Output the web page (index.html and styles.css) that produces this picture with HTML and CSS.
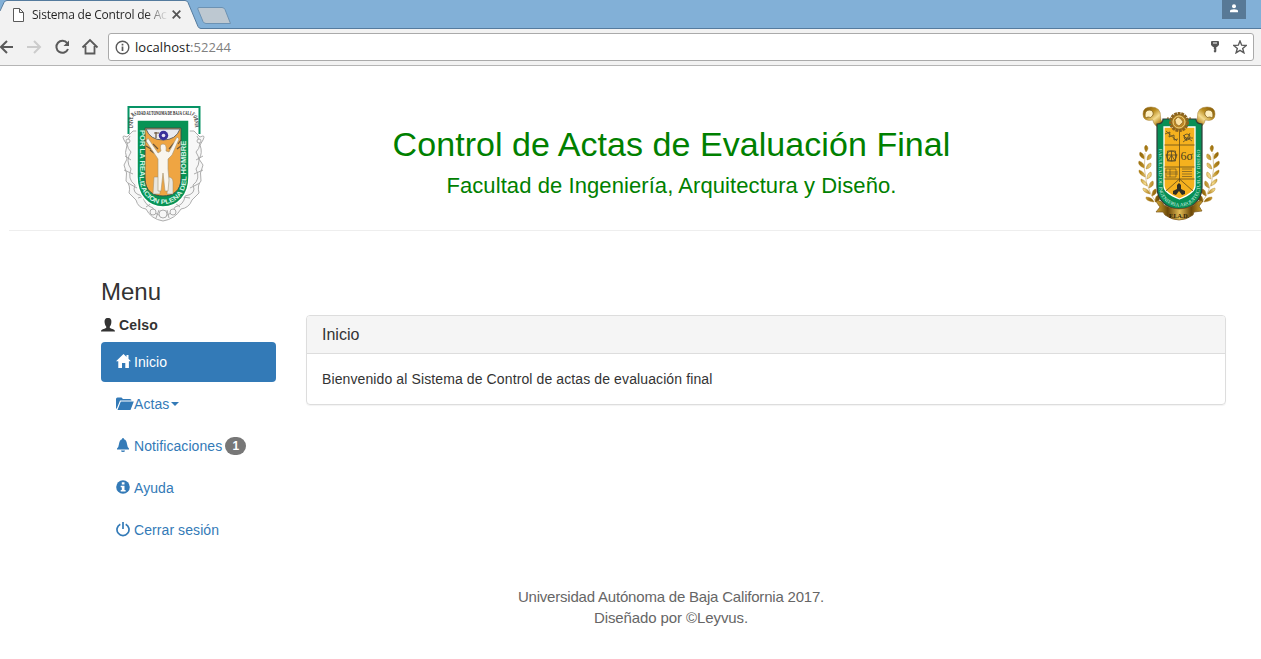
FILE: index.html
```html
<!DOCTYPE html>
<html lang="es">
<head>
<meta charset="utf-8">
<title>Sistema de Control de Actas</title>
<link rel="stylesheet" href="styles.css">
</head>
<body>
<div class="browser">
  <div class="tabstrip">
    <svg class="tab-shapes" width="240" height="29" viewBox="0 0 240 29">
      <path d="M-2 29V14L4 2.500Q5 .5 7 .5H185Q187 .5 188 2.500L198 26.500Q199 28.500 201 28.500V30H-2Z" fill="#f2f2f2"/>
      <path d="M0 11L4 2.500Q5 .5 7 .5H185Q187 .5 188 2.500L198 26.500Q199 28.500 201 28.500H240" fill="none" stroke="#557b9e"/>
      <path d="M199 7.500H222Q224 7.500 225 9.500L230.500 23.500H206Q204 23.500 203 21.500L197.800 9Q197.500 7.500 199 7.500Z" fill="#bdc8d1" stroke="#6c92b3"/>
    </svg>
    <div class="tab-content">
      <svg width="11" height="14" viewBox="0 0 11 14" fill="#fff" stroke="#5a5a5a"><path d="M.5.5H6.500L10.500 4.500V13.500H.5ZM6.500.5V4.500H10.500"/></svg>
      <span class="tab-title">Sistema de Control de Ac</span>
      <svg class="tab-close" width="9" height="9" viewBox="0 0 9 9" fill="none" stroke="#555" stroke-width="1.800"><path d="M.7.7L8.300 8.300M8.300.7L.7 8.300"/></svg>
    </div>
    <div class="profile"><svg width="10" height="9" viewBox="0 0 10 9" fill="#fff"><circle cx="5" cy="2.200" r="2"/><path d="M1 8.300V7Q1 5.300 5 5.300T9 7V8.300Z"/></svg></div>
  </div>
  <div class="toolbar">
    <svg class="nav" width="108" height="37" viewBox="0 0 108 37" fill="none" stroke="#5a5a5a" stroke-width="2">
      <path d="M13 18H1M7 12L1 18L7 24"/>
      <path d="M27 18H39M34 12L40 18L34 24" stroke="#ccc"/>
      <path d="M67.200 14.200A6 6 0 1 0 68 20"/><path d="M69 11.500V17H63.500Z" fill="#5a5a5a" stroke="none"/>
      <path d="M82.500 18.500L90 11L97.500 18.500M85.500 17V24.500H94.500V17" stroke-width="1.800"/>
    </svg>
    <div class="address">
      <svg width="15" height="15" viewBox="0 0 15 15" fill="none" stroke="#5a5a5a" stroke-width="1.400"><circle cx="7.500" cy="7.500" r="6.300"/><path d="M7.500 6.500V11M7.500 3.700V5.400" stroke-width="1.700"/></svg>
      <span class="url">localhost<span class="port">:52244</span></span>
      <svg class="key" width="10" height="14" viewBox="0 0 10 14"><path d="M1 2Q1 1 2 1H8Q9 1 9 2V5L7 7H6.300V11.500L5 12.700L3.800 11.500V10.500L4.700 10L3.800 9V7H3L1 5Z" fill="#555"/><path d="M3 3H7" stroke="#fff"/></svg>
      <svg class="star" width="14" height="14" viewBox="0 0 14 14"><path d="M7 1L8.700 5.200L13.200 5.500L9.700 8.400L10.900 12.800L7 10.400L3.100 12.800L4.300 8.400L.8 5.500L5.300 5.200Z" fill="none" stroke="#5a5a5a" stroke-width="1.400"/></svg>
    </div>
  </div>
</div>

<header class="masthead">
  <div class="masthead-inner">
    <svg class="crest" width="110" height="135" viewBox="0 0 110 135">
      <g fill="#f7f7f7" stroke="#a4a4a4" stroke-width=".9">
        <path d="M17 42Q11 39 14 45L17 50Q14 58 17 64L14 70Q18 78 16 86Q21 90 19 98L26 105Q28 113 36 114Q41 124 53 126Q65 124 71 114Q79 113 82 105L89 98Q87 90 91 86Q89 78 93 70L89 64Q93 58 90 50L93 45Q96 39 90 42L84 36H23Z"/>
        <path d="M20 41Q14 50 21 57Q15 66 21 74Q17 84 25 90Q21 99 33 101Q34 110 43 113Q44 120 53 121Q62 120 65 112Q74 110 75 101Q87 99 83 90Q91 84 86 74Q92 66 86 57Q93 50 87 41" fill="none"/>
        <path d="M15 61L21 65M14 75L23 79M18 88L27 93M28 103L34 101M36 112L42 108M46 123L49 115M59 123L57 115M93 61L86 65M93 75L84 79M90 88L80 93M80 103L73 102M70 112L65 108"/>
        <circle cx="18" cy="46" r="2"/><circle cx="89" cy="46" r="2"/><circle cx="43" cy="117" r="3"/><circle cx="63" cy="117" r="3"/><circle cx="53" cy="119" r="4"/>
      </g>
      <path d="M25 32V20H83V32Z" fill="#fff"/>
      <path d="M18.500 39V12H89.500V39" fill="none" stroke="#079365" stroke-width="2"/>
      <path d="M27 25H79V82C79 100 68 112 53 112S27 100 27 82Z" fill="#079355" stroke="#fff" stroke-width="1.500"/>
      <path d="M35 33H71V83C71 96 63 101 53 101S35 96 35 83Z" fill="#efa542" stroke="#35564b" stroke-width="1"/>
      <path d="M36 34H70Q66 45 53 45T36 34Z" fill="#e9eaf0" stroke="#666"/>
      <circle cx="53.500" cy="40.500" r="4.700" fill="#39309a"/><circle cx="53.500" cy="40.500" r="1.800" fill="#e6e3f1"/>
      <path d="M46 37V43M44 38H49M39 49L35 45M41 54L36 51M68 49L71 45M67 54L71 51M43 49L48 54M64 48L59 54M44 58L40 55" stroke="#69533a" stroke-width="1.200" fill="none"/>
      <path d="M44 82H50V99H43ZM58 82Q63 82 63 87V99H57Z" fill="#e9e6df" stroke="#a28a60" stroke-width=".5"/>
      <path d="M38 43L48 58L51 56Q49 49 53 49T56 56L59 57L67 42L69 44L62 60L58 64L58 74L59 85L58 96H55L53 78L51 96H48L48 74L48 64L36 46Z" fill="#f9f5ed" stroke="#a39474" stroke-width=".6"/>
      <path id="motto" d="M29.500 35V82C29.500 98 40 109 53 109S76.500 98 76.500 82V34" fill="none"/>
      <path id="university" d="M23 33V23Q23 20 28 20H80Q85 20 85 33" fill="none"/>
      <text class="motto"><textPath href="#motto" textLength="163" lengthAdjust="spacingAndGlyphs">POR LA REALIZACION PLENA DEL HOMBRE</textPath></text>
      <text class="university"><textPath href="#university" textLength="83" lengthAdjust="spacingAndGlyphs">UNIVERSIDAD AUTONOMA DE BAJA CALIFORNIA</textPath></text>
    </svg>
    <div class="headings">
      <h1>Control de Actas de Evaluación Final</h1>
      <h3>Facultad de Ingeniería, Arquitectura y Diseño.</h3>
    </div>
    <svg class="crest" width="110" height="135" viewBox="0 0 110 135">
      <defs>
        <linearGradient id="gold" x1="0" x2="1" y1="0" y2="1"><stop stop-color="#795000"/><stop offset=".3" stop-color="#b98c1f"/><stop offset=".5" stop-color="#f5dc90"/><stop offset=".7" stop-color="#b1801a"/><stop offset="1" stop-color="#624100"/></linearGradient>
        <linearGradient id="ribbon"><stop stop-color="#d8aa32"/><stop offset=".25" stop-color="#6b4708"/><stop offset=".5" stop-color="#e2bc55"/><stop offset=".75" stop-color="#6b4708"/><stop offset="1" stop-color="#d8aa32"/></linearGradient>
        <g id="leaves" fill="url(#gold)" stroke="#a77814" stroke-width=".4">
          <path d="M21 57Q18 52 21 50Q25 53 21 57ZM19 64Q13 61 15 57Q20 59 19 64ZM22 65Q22 59 26 59Q28 64 22 65ZM19 73Q12 70 14 66Q20 68 19 73ZM21 74Q22 68 26 68Q27 73 21 74ZM20 82Q13 79 14 75Q20 77 20 82ZM22 84Q22 78 26 77Q28 82 22 84ZM22 91Q15 88 16 84Q22 86 22 91ZM24 93Q24 87 28 86Q30 91 24 93ZM25 99Q17 97 18 93Q24 94 25 99ZM27 101Q27 94 31 94Q33 99 27 101ZM29 107Q20 106 21 102Q27 102 29 107ZM30 107Q30 100 34 100Q37 106 30 107Z"/>
          <path d="M20 58Q16 91 34 111" fill="none"/>
        </g>
        <g id="horn">
          <path d="M44 27Q40 35 35 33Q28 30 28 25Q18 27 18 19Q18 12 26 12Q36 12 35.500 22Q36 28 39 27Q42 26 43 22Z" fill="url(#gold)" stroke="#9c7527" stroke-width=".5"/>
          <path d="M20 20Q20 15 25 15Q29 16 28 20Q26 24 23 22Q20 24 20 20Z" fill="#fff0c0" stroke="#83601a" stroke-width=".8"/>
        </g>
      </defs>
      <use href="#leaves"/><use href="#leaves" transform="translate(108 0) scale(-1 1)"/>
      <use href="#horn"/><use href="#horn" transform="translate(108 0) scale(-1 1)"/>
      <path d="M38 24H71Q71 29 77 29V92C77 105 67 114 54.500 114S32 105 32 92V29Q38 29 38 24Z" fill="#078f55" stroke="#303a37" stroke-width="1.200"/>
      <path d="M39 32H70V91Q70 98 54.500 104Q39 98 39 91Z" fill="#f5b11e" stroke="#fff" stroke-width="1.300"/>
      <path d="M39.500 50H69.500M39.500 72H69.500M39.500 84H54L69.500 84M54.500 34V87M54.500 84L41 96M54.500 84L68 96" fill="none" stroke="#614b1b" stroke-width=".8"/>
      <g fill="none" stroke="#574a27" stroke-width=".8"><circle cx="46.500" cy="61" r="5"/><path d="M42.500 56H50.500V66H42.500ZM46.500 56V66M40.500 60H52.500M46.500 60L43 66M46.500 60L50 66M41 36L52 46M40 39L45 37L44 42L49 40L49 45L53 44M58 40L62 44L58 47M65 38L61 46M59 43H68M67 46L63 43"/><circle cx="62" cy="42" r="3"/><path d="M41 74H51V82H41ZM40 77H53M42 79H53M57 74H67M57 76.500H67M57 79H67M57 81.500H67M45 74V82" stroke-width=".6"/></g>
      <text class="sigma" x="55.500" y="65">6σ</text>
      <path d="M54 88L56 90V94L60 96L60 99L57 100L54 96L51 100L48 99V96L52 94V90Z" fill="#302f24"/>
      <path id="faculty" d="M34 54V91C34 103 43 111.500 54.500 111.500S75 103 75 91V52" fill="none"/>
      <text class="faculty"><textPath href="#faculty" textLength="138" lengthAdjust="spacingAndGlyphs">FACULTAD DE INGENIERIA ARQUITECTURA Y DISEÑO</textPath></text>
      <circle cx="54" cy="27" r="8.500" fill="#a87c22" stroke="#8c641e" stroke-width="3" stroke-dasharray="2.800 .7"/><circle cx="54" cy="27" r="6" fill="#bc8725" stroke="#f1d17b"/><path d="M50 25L53 22L56 24L58 27L54 31L51 29Z" fill="#fbe2a0" stroke="#7a591b" stroke-width=".6"/>
      <path d="M31 106Q37 105 39 110Q54 118 69 110Q72 105 78 106L74 111L77 116L69 117L68 120Q54 130 40 120L38 117L31 117L35 112Z" fill="url(#ribbon)" stroke="#77551c" stroke-width=".7"/>
      <text class="fiad" x="54" y="123" text-anchor="middle">F.I.A.D.</text>
    </svg>
  </div>
</header>

<main class="content">
  <nav class="sidebar">
    <h2>Menu</h2>
    <div class="user"><svg width="14" height="14" viewBox="0 0 14 14"><path d="M7 0C4 0 3.300 2 3.700 5C4 7 4.600 8 5.200 8.500V10C3 11 0 11.200 0 13.500H14C14 11.200 11 11 8.800 10V8.500C9.400 8 10 7 10.300 5C10.700 2 10 0 7 0Z" fill="currentColor"/></svg><b>Celso</b></div>
    <a class="item active"><svg width="15" height="17" viewBox="0 0 15 17"><path d="M7.500 0L15 7.300H12.900V14H9.300V9H6V14H2.300V7.300H0ZM10.500 1H12.500V6L10.500 4Z" fill="currentColor"/></svg><span>Inicio</span></a>
    <a class="item folder"><svg width="18" height="15" viewBox="0 0 18 15"><path d="M0 12V2Q0 .5 1.500 .5H5.500L7 2H14Q15.500 2 15.500 3.500H4L1 11ZM4.800 4.500H17.800L14.500 13H1.500Z" fill="currentColor"/></svg><span>Actas</span><i class="caret"></i></a>
    <a class="item"><svg width="15" height="17" viewBox="0 0 15 17"><path d="M7 0Q8 0 8 1.300Q10.500 2 11 6Q11.300 9 13 10.500V11.500H1V10.500Q2.700 9 3 6Q3.500 2 6 1.300Q6 0 7 0ZM5 12.500H9Q9 14 7 14T5 12.500Z" fill="currentColor"/></svg><span>Notificaciones</span><span class="badge">1</span></a>
    <a class="item"><svg width="15" height="17" viewBox="0 0 15 17"><circle cx="7" cy="7" r="6.800" fill="currentColor"/><path d="M5.800 2.200H8.500V4.500H5.800ZM4.700 5.800H8.500V10H9.600V11.500H4.700V10H5.800V7.200H4.700Z" fill="#fff"/></svg><span>Ayuda</span></a>
    <a class="item"><svg width="15" height="17" viewBox="0 0 15 17" fill="none" stroke="currentColor" stroke-width="1.700"><path d="M4.300 2.200A6 6 0 1 0 9.700 2.200M7 0V7"/></svg><span>Cerrar sesión</span></a>
  </nav>
  <section class="panel">
    <div class="panel-heading">Inicio</div>
    <div class="panel-body">Bienvenido al Sistema de Control de actas de evaluación final</div>
  </section>
</main>
<footer class="footer"><p>Universidad Autónoma de Baja California 2017.</p><p>Diseñado por ©Leyvus.</p></footer>
</body>
</html>
```

FILE: styles.css
```css
* { box-sizing: border-box; }
body { margin: 0; height: 659px; overflow: hidden; background: #fff; color: #333; font: 14px/20px "Liberation Sans", Arial, sans-serif; }
h1, h2, h3, p { margin: 0; font-weight: 400; }
svg { display: block; flex: none; }

.browser { height: 66px; font-family: "Open Sans", "Noto Sans", sans-serif; }
.tabstrip { position: relative; display: flex; height: 29px; background: #82b0d7; border-bottom: 1px solid #557b9e; }
.tab-shapes { position: absolute; left: 0; top: 0; }
.tab-content { position: relative; display: flex; align-items: center; width: 200px; height: 29px; padding-left: 13px; }
.tab-title { width: 135px; margin-left: 8px; overflow: hidden; white-space: nowrap; font-size: 12px; letter-spacing: -.21px; background: linear-gradient(90deg, #222 84%, #ddd 99%); background-clip: text; color: transparent; }
.tab-close { margin-left: 5px; }
.profile { display: flex; justify-content: center; width: 24px; height: 19px; margin: 0 15px 0 auto; padding-top: 4px; background: #587996; }
.toolbar { display: flex; height: 37px; background: #f2f2f2; border-bottom: 1px solid #b5b5b5; }
.address { display: flex; align-items: center; width: 1146px; height: 28px; margin-top: 4px; padding: 0 6px; background: #fff; border: 1px solid #aaa; border-radius: 3px; }
.url { margin-left: 5px; color: #222; font-size: 13px; letter-spacing: .07px; }
.port { color: #808080; }
.key { margin-left: auto; }
.star { margin-left: 13px; }

.masthead { height: 165px; margin-left: 9px; border-bottom: 1px solid #eee; }
.masthead-inner { display: flex; justify-content: space-between; width: 1125px; margin-left: 101px; padding-top: 29px; }
.headings { padding-top: 29px; margin-left: -2px; color: green; text-align: center; }
h1 { font-size: 34px; line-height: 40px; letter-spacing: .06px; }
h3 { margin-top: 10px; font-size: 22px; line-height: 24px; letter-spacing: .08px; }
.motto { font: bold 6.500px "Liberation Sans", sans-serif; fill: #d5f3e6; }
.university { font: bold 6px "Liberation Serif", serif; fill: #222; }
.faculty { font: 5px "Liberation Serif", serif; fill: #dcf6ea; }
.sigma { font: 12px "Liberation Serif", serif; fill: #4c421d; }
.fiad { font: bold 6px "Liberation Serif", serif; fill: #2d1d06; }

.content { display: flex; gap: 30px; height: 355px; padding-left: 101px; }
.sidebar { width: 175px; padding-top: 48px; }
h2 { height: 26px; font-size: 24px; line-height: 26px; }
.user { display: flex; align-items: center; gap: 4px; height: 20px; margin: 10px 0 7px; letter-spacing: .15px; }
.item { display: flex; align-items: center; height: 40px; margin-bottom: 2px; padding: 0 15px; border-radius: 4px; color: #337ab7; letter-spacing: .08px; }
.item span { margin-left: 3px; }
.item.folder span { margin-left: 0; }
.item.active { background: #337ab7; color: #fff; }
.caret { margin-left: 2px; border: 4px solid transparent; border-top-color: currentColor; border-bottom: 0; }
.item .badge { width: 21px; height: 18px; border-radius: 10px; background: #777; color: #fff; font: bold 12px/18px "Liberation Sans", Arial, sans-serif; text-align: center; }
.panel { width: 920px; height: 90px; margin-top: 84px; border: 1px solid #ddd; border-radius: 4px; box-shadow: 0 1px 1px rgba(0,0,0,.05); }
.panel-heading { height: 38px; padding: 0 15px; border-bottom: 1px solid #ddd; border-radius: 3px 3px 0 0; background: #f5f5f5; font-size: 16px; line-height: 37px; }
.panel-body { padding: 15px; letter-spacing: .11px; }
.footer { width: 1140px; margin-left: 101px; color: #666; font-size: 15px; line-height: 21px; letter-spacing: -.2px; text-align: center; }
.footer p + p { letter-spacing: -.1px; }
```
